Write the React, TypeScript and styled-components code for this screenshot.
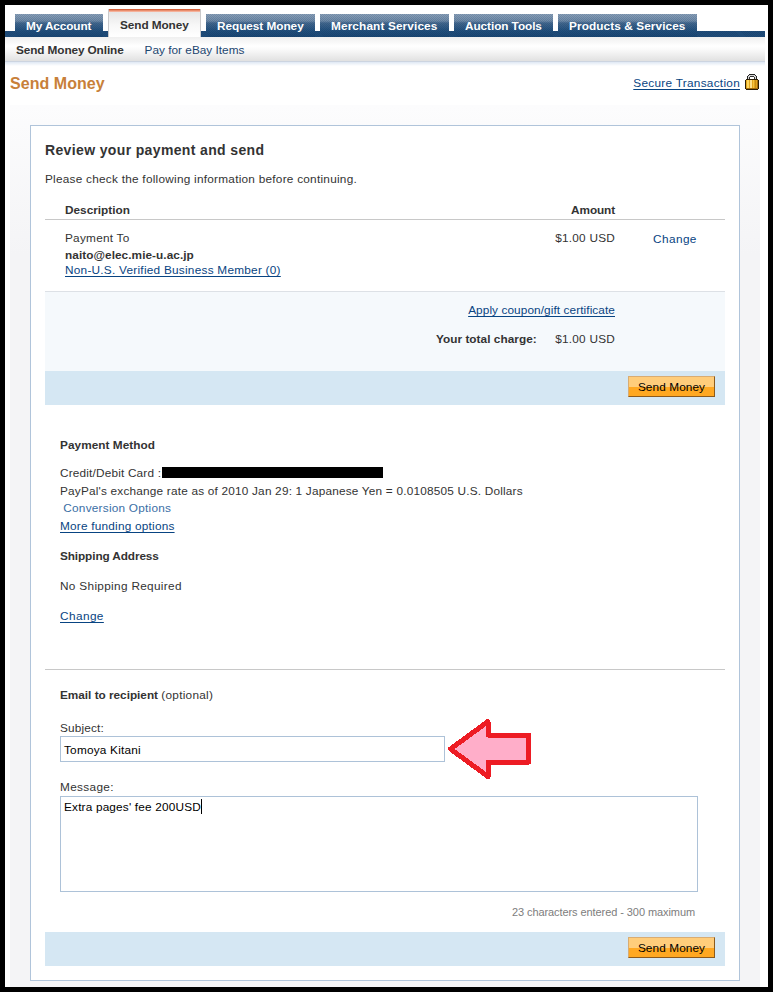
import React from 'react';
import styled, { createGlobalStyle, css } from 'styled-components';

const GlobalStyle = createGlobalStyle`
  * { box-sizing: border-box; }
  body {
    margin: 0;
    background: #000;
    font: 11.8px/14px "Liberation Sans", Arial, sans-serif;
    color: #333;
  }
`;

const Frame = styled.div`
  width: 773px;
  height: 992px;
  padding: 5px;
  background: #000;
  overflow: hidden;
`;

const Page = styled.div`
  display: flex;
  flex-direction: column;
  width: 763px;
  height: 982px;
  background: #fff;
  overflow: hidden;
`;

const baseTracking = 0.09;

const weave = 'repeating-linear-gradient(45deg, rgba(10, 40, 80, 0.16) 0 0.7px, transparent 0.7px 1.42px)';

const TabStrip = styled.nav`
  display: flex;
  align-items: flex-end;
  gap: 5px;
  width: 760px;
  height: 32px;
  flex: none;
  padding-left: 10px;
  background: linear-gradient(#fff, #fff) 0 0 / 100% 26px no-repeat, ${weave}, #1f4c79;
`;

const Tab = styled.a<{ $w: number; $ls: number; $active?: boolean }>`
  width: ${p => p.$w}px;
  height: 23px;
  padding: 5px 0 0 11px;
  color: #fff;
  font-weight: bold;
  white-space: nowrap;
  letter-spacing: ${p => p.$ls + baseTracking}px;
  background: ${weave}, linear-gradient(#8ba1b9 0, #6f8ba8 7px, #43688e 9px, #214f7c 17px, #194673 100%);
  ${p =>
    p.$active &&
    css`
      height: 28px;
      padding: 9px 0 0 11px;
      color: #333;
      border: 1px solid #c9c9cb;
      border-width: 0 1px;
      background: linear-gradient(#d4613c 0 1px, #e88c6c 1px 2px, #f5b19a 2px 3px, #e6e6e6 3px, #f7f7f7 16px, #fff);
    `}
`;

const SubNav = styled.div`
  display: flex;
  gap: 21px;
  width: 760px;
  height: 29px;
  flex: none;
  padding: 6px 0 0 11px;
  background: linear-gradient(
    #efefef 0, #fff 9px, #fbfbfb 12px, #e2e2e2 23.5px,
    #ccd4e0 24px 25px, #dfe8f4 25px, #fff 29px
  );
`;

const Text = styled.span<{ $ls?: number; $bold?: boolean; $tone?: string }>`
  letter-spacing: ${p => (p.$ls ?? 0.16) + baseTracking}px;
  font-weight: ${p => (p.$bold ? 'bold' : 'normal')};
  color: ${p => p.$tone ?? 'inherit'};
  white-space: nowrap;
`;

const Link = styled(Text).attrs({ as: 'a' })<{ $plain?: boolean }>`
  color: ${p => p.$tone ?? '#084482'};
  text-decoration: ${p => (p.$plain ? 'none' : 'underline')};
  text-decoration-thickness: 1px;
  text-underline-offset: 2px;
  text-decoration-skip-ink: none;
`;

const TitleBar = styled.header`
  display: flex;
  justify-content: space-between;
  height: 39px;
  flex: none;
  padding: 8px 9px 0 5px;
`;

const Title = styled.h1`
  margin: 0;
  font-size: 16px;
  line-height: 20px;
  letter-spacing: 0.05px;
  color: #c88039;
`;

const Secure = styled.div`
  display: flex;
  gap: 5px;
  padding-top: 2px;
  svg { margin-top: -2px; }
`;

const Backdrop = styled.main`
  width: 750px;
  height: 882px;
  margin-left: 5px;
  padding: 20px 20px 0;
  background: linear-gradient(#fcfcfd, #f4f4f6 150px);
`;

const Panel = styled.section`
  display: flex;
  flex-direction: column;
  width: 710px;
  height: 856px;
  padding: 0 14px;
  border: 1px solid #b0c4da;
  background: #fff;
`;

const Heading = styled.h2`
  margin: 14px 0 0;
  font-size: 14px;
  line-height: 20px;
  letter-spacing: 0.36px;
`;

const Line = styled.div<{ $mt: number }>`
  height: 14px;
  margin-top: ${p => p.$mt}px;
  white-space: nowrap;
`;

const Columns = styled.div`
  display: grid;
  grid-template-columns: 1fr 200px 110px;
  padding-left: 20px;
`;

const HeadRow = styled(Columns)`
  height: 17px;
  margin-top: 17px;
  border-bottom: 1px solid #c8c8c8;
`;

const ItemRow = styled(Columns)`
  height: 72px;
  padding-top: 11px;
  border-bottom: 1px solid #dde1e6;
`;

const RightCell = styled.div`
  text-align: right;
`;

const ChangeCell = styled.div`
  padding: 1px 0 0 38px;
`;

const Totals = styled.div`
  height: 79px;
  padding-right: 110px;
  background: #f5f9fc;
`;

const TotalLine = styled(Line)`
  display: flex;
  justify-content: flex-end;
  gap: 18.5px;
`;

const ActionBar = styled.div<{ $mt?: number }>`
  display: flex;
  justify-content: flex-end;
  height: 34px;
  flex: none;
  margin-top: ${p => p.$mt ?? 0}px;
  padding: 5px 10px 0 0;
  background: #d5e7f3;
`;

const Button = styled.button`
  width: 87px;
  height: 21px;
  margin: 0;
  padding: 1px 0 0;
  border: 1px solid;
  border-color: #d9ac72 #8c5a1c #8c5a1c #d9ac72;
  background: linear-gradient(#ffcd7b 0 10px, #ffa822 10px);
  font: 11.8px/18px "Liberation Sans", Arial, sans-serif;
  letter-spacing: 0.1px;
  color: #000;
`;

const Details = styled.div`
  display: flex;
  flex-direction: column;
  height: 264px;
  padding-left: 15px;
`;

const CardLine = styled(Line)`
  display: flex;
`;

const Redaction = styled.span`
  width: 221px;
  height: 11px;
  margin: 1px 0 0 0.6px;
  background: #000;
`;

const EmailForm = styled.div`
  padding-left: 15px;
  border-top: 1px solid #c8c8c8;
`;

const SubjectRow = styled.div`
  position: relative;
  height: 26px;
  margin-top: 1px;
`;

const Field = styled.div`
  width: 385px;
  height: 26px;
  padding: 6px 0 0 3px;
  border: 1px solid #adc2d8;
  color: #000;
`;

const MessageField = styled(Field)`
  display: flex;
  width: 638px;
  height: 96px;
  margin-top: 2px;
  padding-top: 3px;
`;

const Caret = styled.span`
  width: 1px;
  height: 15px;
  margin-top: -1px;
  background: #000;
`;

const Arrow = styled.svg`
  position: absolute;
  left: 386px;
  top: -19px;
`;

const Counter = styled(Line)`
  padding-right: 30px;
  text-align: right;
  font-size: 11px;
  letter-spacing: -0.08px;
  color: #7d7d7d;
`;

const tabs = [
  { label: 'My Account', w: 88, ls: -0.2 },
  { label: 'Send Money', w: 93, ls: -0.17, active: true },
  { label: 'Request Money', w: 109, ls: -0.13 },
  { label: 'Merchant Services', w: 129, ls: 0.04 },
  { label: 'Auction Tools', w: 99, ls: -0.16 },
  { label: 'Products & Services', w: 139, ls: 0 },
];

const Padlock = () => (
  <svg width="14" height="17" viewBox="0 0 14 17" shapeRendering="crispEdges">
    <path d="M4 0h6v1h1v1h1v5H2V2h1V1h1z" fill="#222" />
    <path d="M4 1h6v1h1v4H3V2h1z" fill="#d5d5d5" />
    <path d="M5 2h4v1h1v3H4V3h1z" fill="#333" />
    <path d="M5 3h4v3H5z" fill="#fff" />
    <path d="M1 5h12v1h1v9h-1v1H1v-1H0V6h1z" fill="#2b1d05" />
    <path d="M1 6h12v9H1z" fill="#e2a51d" />
    <path d="M2 6h2v9H2z" fill="#ffd75c" />
    <path d="M5 6h2v9H5z" fill="#ffe08a" />
    <path d="M8 6h1v9H8z" fill="#f7c441" />
    <path d="M10 6h1v9h-1z" fill="#c98c14" />
    <path d="M12 6h1v9h-1zM1 14h12v1H1z" fill="#a66c0c" />
  </svg>
);

export default function App() {
  return (
    <Frame>
      <GlobalStyle />
      <Page>
        <TabStrip>
          {tabs.map(t => (
            <Tab key={t.label} $w={t.w} $ls={t.ls} $active={t.active}>{t.label}</Tab>
          ))}
        </TabStrip>
        <SubNav>
          <Text $bold $ls={-0.2}>Send Money Online</Text>
          <Link $plain $ls={-0.08} $tone="#1c4670">Pay for eBay Items</Link>
        </SubNav>
        <TitleBar>
          <Title>Send Money</Title>
          <Secure>
            <Link $ls={0.19}>Secure Transaction</Link>
            <Padlock />
          </Secure>
        </TitleBar>
        <Backdrop>
          <Panel>
            <Heading>Review your payment and send</Heading>
            <Line $mt={12}><Text>Please check the following information before continuing.</Text></Line>
            <HeadRow>
              <Text $bold $ls={-0.09}>Description</Text>
              <RightCell><Text $bold $ls={-0.2}>Amount</Text></RightCell>
            </HeadRow>
            <ItemRow>
              <div>
                <Line $mt={0}><Text>Payment To</Text></Line>
                <Line $mt={3}><Text $bold $ls={-0.03}>naito@elec.mie-u.ac.jp</Text></Line>
                <Line $mt={1}><Link>Non-U.S. Verified Business Member (0)</Link></Line>
              </div>
              <RightCell><Text $ls={0.14}>$1.00 USD</Text></RightCell>
              <ChangeCell><Link $plain $ls={0.33}>Change</Link></ChangeCell>
            </ItemRow>
            <Totals>
              <TotalLine $mt={11}><Link $ls={0}>Apply coupon/gift certificate</Link></TotalLine>
              <TotalLine $mt={15}>
                <Text $bold $ls={-0.05}>Your total charge:</Text>
                <Text $ls={0.14}>$1.00 USD</Text>
              </TotalLine>
            </Totals>
            <ActionBar><Button>Send Money</Button></ActionBar>
            <Details>
              <Line $mt={33}><Text $bold $ls={-0.04}>Payment Method</Text></Line>
              <CardLine $mt={14}><Text $ls={0.09}>Credit/Debit Card :</Text><Redaction /></CardLine>
              <Line $mt={4}>
                <Text $ls={0.11}>PayPal's exchange rate as of 2010 Jan 29: 1 Japanese Yen = 0.0108505 U.S. Dollars</Text>
              </Line>
              <Line $mt={3}>&nbsp;<Link $plain $ls={0.15} $tone="#3a6ea5">Conversion Options</Link></Line>
              <Line $mt={4}><Link $ls={0.13}>More funding options</Link></Line>
              <Line $mt={16}><Text $bold $ls={-0.2}>Shipping Address</Text></Line>
              <Line $mt={16}><Text $ls={0.23}>No Shipping Required</Text></Line>
              <Line $mt={16}><Link $ls={0.33}>Change</Link></Line>
            </Details>
            <EmailForm>
              <Line $mt={18}>
                <Text $bold $ls={-0.11}>Email to recipient</Text> <Text $ls={0.18}>(optional)</Text>
              </Line>
              <Line $mt={19}><Text $ls={0.08}>Subject:</Text></Line>
              <SubjectRow>
                <Field><Text $ls={0.13}>Tomoya Kitani</Text></Field>
                <Arrow width="90" height="66" viewBox="0 0 90 66" shapeRendering="crispEdges">
                  <path
                    d="M4.5 32L42 4.500V18H82.500V45H42V59.500Z"
                    fill="#ffaec9"
                    stroke="#ed1c24"
                    strokeWidth="5"
                    strokeLinejoin="round"
                  />
                </Arrow>
              </SubjectRow>
              <Line $mt={18}><Text $ls={0.25}>Message:</Text></Line>
              <MessageField><Text $ls={0.09}>Extra pages' fee 200USD</Text><Caret /></MessageField>
              <Counter $mt={13}>23 characters entered - 300 maximum</Counter>
            </EmailForm>
            <ActionBar $mt={13}><Button>Send Money</Button></ActionBar>
          </Panel>
        </Backdrop>
      </Page>
    </Frame>
  );
}
